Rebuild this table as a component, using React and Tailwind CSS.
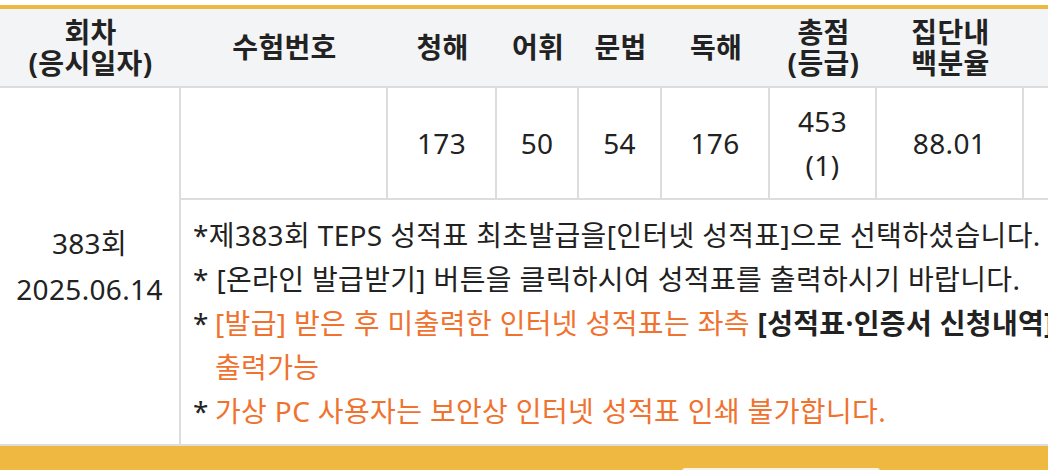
const FONT = "font-['Noto_Sans','Noto_Sans_CJK_KR',sans-serif]"

const HEAD = [
  { w: 'w-[181px]', lines: ['회차', '(응시일자)'] },
  { w: 'w-[207px]', lines: ['수험번호'] },
  { w: 'w-[109px]', lines: ['청해'] },
  { w: 'w-[82px]', lines: ['어휘'] },
  { w: 'w-[83px]', lines: ['문법'] },
  { w: 'w-[108px]', lines: ['독해'] },
  { w: 'w-[107px]', lines: ['총점', '(등급)'] },
  { w: 'w-[147px]', lines: ['집단내', '백분율'] },
  { w: 'w-[200px]', lines: [''] },
]

const SCORES = [
  { w: 'w-[207px]', lines: [''] },
  { w: 'w-[109px]', lines: ['173'] },
  { w: 'w-[82px]', lines: ['50'] },
  { w: 'w-[83px]', lines: ['54'] },
  { w: 'w-[108px]', lines: ['176'] },
  { w: 'w-[107px]', lines: ['453', '(1)'] },
  { w: 'w-[147px]', lines: ['88.01'] },
  { w: 'w-[200px]', lines: [''] },
]

export default function App() {
  return (
    <div className={`h-[470px] w-[1048px] overflow-hidden bg-white pt-[5px] tracking-[0.35px] text-[#222] ${FONT}`}>
      <div className="w-[1300px] border-t-4 border-[#efb941]">
        {/* header */}
        <div className="flex h-[79px] border-b-2 border-[#dddddd] bg-[#f3f4f6]">
          {HEAD.map((h, i) => (
            <div key={i} className={`${h.w} flex shrink-0 flex-col items-center justify-center text-[28px] font-bold leading-[31px]`}>
              {h.lines.map((l) => (
                <span key={l}>{l}</span>
              ))}
            </div>
          ))}
        </div>

        {/* body */}
        <div className="flex border-b-2 border-[#dddddd]">
          <div className="flex w-[181px] shrink-0 flex-col items-center justify-center border-r-2 border-[#dddddd] text-[28px] leading-[46px]">
            <span>383회</span>
            <span>2025.06.14</span>
          </div>
          <div className="flex-1">
            <div className="flex h-[112px] border-b-2 border-[#dddddd]">
              {SCORES.map((s, i) => (
                <div key={i} className={`${s.w} flex shrink-0 flex-col items-center justify-center border-r-2 border-[#dddddd] text-[28px] leading-[44px]`}>
                  {s.lines.map((l) => (
                    <span key={l}>{l}</span>
                  ))}
                </div>
              ))}
            </div>
            <div className="h-[244px] whitespace-nowrap pl-[12px] pt-[13px] text-[28px] leading-[44px]">
              <div>*제383회 TEPS 성적표 최초발급을[인터넷 성적표]으로 선택하셨습니다.</div>
              <div>* [온라인 발급받기] 버튼을 클릭하시여 성적표를 출력하시기 바랍니다.</div>
              <div className="flex">
                <span className="w-[22px] shrink-0">*</span>
                <div>
                  <div>
                    <span className="text-[#f0722f]">[발급] 받은 후 미출력한 인터넷 성적표는 좌측 </span>
                    <span className="font-bold">[성적표·인증서 신청내역]</span>
                    <span className="text-[#f0722f]">에서</span>
                  </div>
                  <div className="text-[#f0722f]">출력가능</div>
                </div>
              </div>
              <div className="flex">
                <span className="w-[22px] shrink-0">*</span>
                <span className="text-[#f0722f]">가상 PC 사용자는 보안상 인터넷 성적표 인쇄 불가합니다.</span>
              </div>
            </div>
          </div>
        </div>

        {/* bottom bar */}
        <div className="h-[40px] bg-[#efb941] pt-[22px]">
          <div className="ml-[682px] h-[20px] w-[198px] rounded-t-[3px] bg-[#f6f3e6]" />
        </div>
      </div>
    </div>
  )
}
